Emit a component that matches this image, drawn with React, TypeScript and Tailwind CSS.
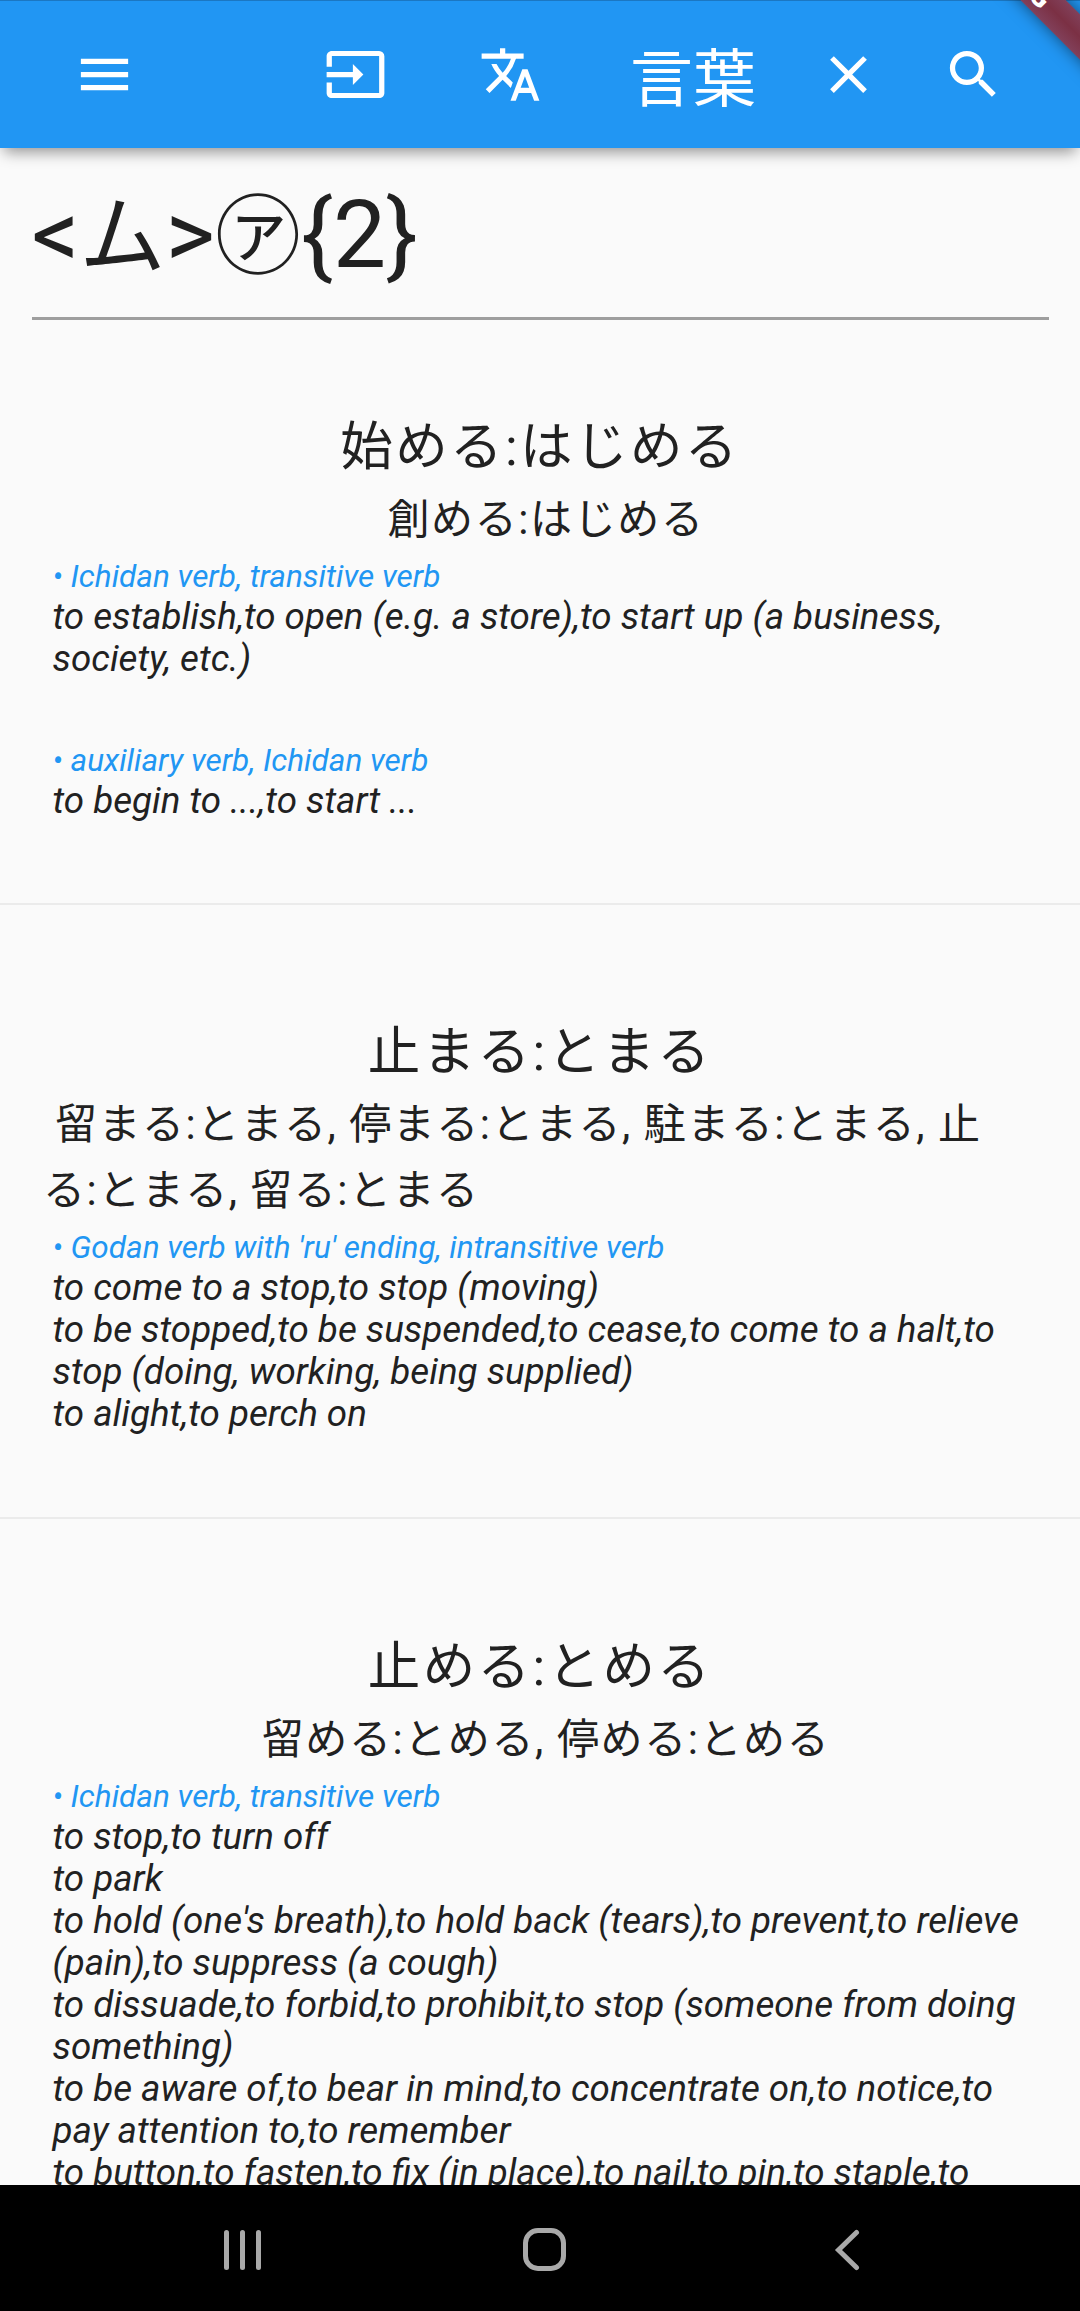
import React from "react";
import { MdClose, MdInput, MdMenu, MdSearch, MdTranslate } from "react-icons/md";

type Sense = { pos: string; lines: string[] };
type Entry = { title: string; alternatives: string[]; senses: Sense[] };

const entries: Entry[] = [
  {
    title: "始める:はじめる",
    alternatives: [" 創める:はじめる"],
    senses: [
      {
        pos: "Ichidan verb, transitive verb",
        lines: [
          "to establish,to open (e.g. a store),to start up (a business,",
          "society, etc.)",
        ],
      },
      { pos: "auxiliary verb, Ichidan verb", lines: ["to begin to ...,to start ..."] },
    ],
  },
  {
    title: "止まる:とまる",
    alternatives: [
      " 留まる:とまる, 停まる:とまる, 駐まる:とまる, 止",
      "る:とまる, 留る:とまる",
    ],
    senses: [
      {
        pos: "Godan verb with 'ru' ending, intransitive verb",
        lines: [
          "to come to a stop,to stop (moving)",
          "to be stopped,to be suspended,to cease,to come to a halt,to",
          "stop (doing, working, being supplied)",
          "to alight,to perch on",
        ],
      },
    ],
  },
  {
    title: "止める:とめる",
    alternatives: [" 留める:とめる, 停める:とめる"],
    senses: [
      {
        pos: "Ichidan verb, transitive verb",
        lines: [
          "to stop,to turn off",
          "to park",
          "to hold (one's breath),to hold back (tears),to prevent,to relieve",
          "(pain),to suppress (a cough)",
          "to dissuade,to forbid,to prohibit,to stop (someone from doing",
          "something)",
          "to be aware of,to bear in mind,to concentrate on,to notice,to",
          "pay attention to,to remember",
          "to button,to fasten,to fix (in place),to nail,to pin,to staple,to",
        ],
      },
    ],
  },
];

const entryPadding = [
  "pt-[88px] pb-[81px]",
  "pt-[108px] pb-[82px]",
  "pt-[108.5px] pb-[81.5px]",
];

function AppBar() {
  return (
    <header className="relative z-10 flex h-[148px] shrink-0 items-center border-t border-[#1b77c2] bg-[#2196f3] pl-[73px] text-white shadow-[0_8px_14px_-4px_rgba(0,0,0,0.42)]">
      <MdMenu className="size-[63px] shrink-0" />
      <MdInput className="ml-[188px] size-[63px] shrink-0" />
      <MdTranslate className="ml-[92px] size-[63px] shrink-0" />
      <span className="ml-[88px] w-[126px] shrink-0 pt-[10px] text-[63px] leading-[74px] whitespace-nowrap">
        言葉
      </span>
      <MdClose className="ml-[61px] size-[63px] shrink-0" />
      <MdSearch className="ml-[62px] size-[63px] shrink-0" />
    </header>
  );
}

function DebugRibbon() {
  return (
    <div className="absolute top-[-46px] left-[813px] z-20 flex h-8 w-[400px] rotate-45 items-center justify-center bg-linear-to-b from-[#81405a] via-[#7b3044] to-[#81405a] pl-[9px] text-[27px] leading-8 font-black text-white shadow-[0_0_16px_rgba(0,0,0,0.5)]">
      DEBUG
    </div>
  );
}

function EntryBlock({ entry }: { entry: Entry }) {
  const wraps = entry.alternatives.length > 1;
  return (
    <article>
      <h2 className="text-center text-[52.5px] leading-[79px] tracking-[2.4px] whitespace-pre">
        {entry.title}
      </h2>
      <div className="flex justify-center px-[43px]">
        <div
          className={
            wraps
              ? "w-full text-[42px] leading-[66px] tracking-[1.5px] whitespace-pre"
              : "w-fit text-[42px] leading-[66px] tracking-[1.6px] whitespace-pre"
          }
        >
          {entry.alternatives.map((line) => (
            <p key={line}>{line}</p>
          ))}
        </div>
      </div>
      <div className="mt-[5px] flex flex-col gap-[62px] pl-[52.5px] italic">
        {entry.senses.map((sense) => (
          <section key={sense.pos}>
            <p className="text-[31.5px] leading-[38px] whitespace-nowrap text-[#2196f3]">
              • {sense.pos}
            </p>
            <div className="text-[36.75px] leading-[42px] whitespace-nowrap">
              {sense.lines.map((line) => (
                <p key={line}>{line}</p>
              ))}
            </div>
          </section>
        ))}
      </div>
    </article>
  );
}

function NavBar() {
  return (
    <nav className="relative z-10 flex h-[126px] shrink-0 items-center bg-black pl-[224px] text-[#a9a9a9]">
      <div className="flex w-[37px] justify-between pt-[3px]">
        <span className="h-10 w-[5px] rounded-full bg-current" />
        <span className="h-10 w-[5px] rounded-full bg-current" />
        <span className="h-10 w-[5px] rounded-full bg-current" />
      </div>
      <div className="mt-[3px] ml-[262px] size-[43px] rounded-[15px] border-[5.5px] border-current" />
      <svg
        className="mt-[3px] ml-[268px] h-[42px] w-[26px]"
        viewBox="0 0 26 42"
        fill="none"
        stroke="currentColor"
        strokeWidth="5"
        strokeLinecap="round"
        strokeLinejoin="miter"
      >
        <path d="M22.5 3.5 L4.5 21 L22.5 38.5" />
      </svg>
    </nav>
  );
}

export default function App() {
  return (
    <div className="relative flex h-[2311px] w-[1080px] flex-col overflow-hidden bg-[#fafafa] font-['Roboto','Noto_Sans_CJK_JP',sans-serif] text-[#212121]">
      <AppBar />
      <DebugRibbon />
      <main className="min-h-0 flex-1 overflow-hidden">
        <div className="mx-[31.5px] h-[172px] border-b-[3px] border-[#9e9e9e] pt-[31px]">
          <h1 className="text-[94.5px] leading-[111px] whitespace-nowrap">
            &lt;<span className="text-[86px]">ム</span>&gt;<span className="text-[86px]">㋐</span>
            {"{2}"}
          </h1>
        </div>
        <div className="divide-y-2 divide-[#ebebeb]">
          {entries.map((entry, i) => (
            <div key={entry.title} className={entryPadding[i]}>
              <EntryBlock entry={entry} />
            </div>
          ))}
        </div>
      </main>
      <NavBar />
    </div>
  );
}
